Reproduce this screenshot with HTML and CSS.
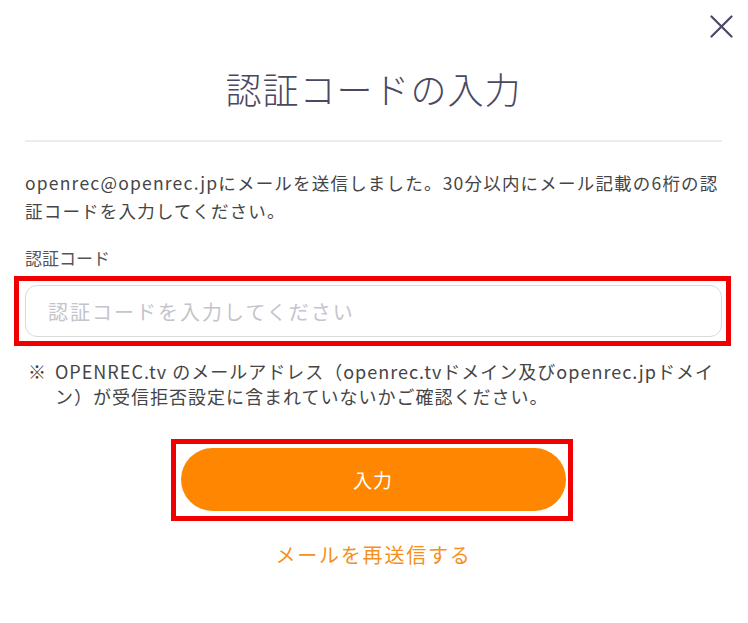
FILE: index.html
```html
<!DOCTYPE html>
<html lang="ja">
<head>
<meta charset="utf-8">
<title>認証コードの入力</title>
<link rel="stylesheet" href="styles.css">
</head>
<body>
<div class="modal">
  <button class="close" aria-label="閉じる">
    <svg width="23" height="23" viewBox="0 0 23 23"><path d="M1.5 1.5 L21.5 21.5 M21.5 1.5 L1.5 21.5" stroke="#4a4866" stroke-width="2.2" stroke-linecap="round" fill="none"/></svg>
  </button>
  <h1 class="title">認証コードの入力</h1>
  <div class="divider"></div>
  <p class="lead">openrec@openrec.jpにメールを送信しました。30分以内にメール記載の6桁の認証コードを入力してください。</p>
  <label class="label" for="code">認証コード</label>
  <div class="mark mark-input">
    <input id="code" class="input" type="text" placeholder="認証コードを入力してください">
  </div>
  <p class="notice"><span class="notice-mark">※</span><span class="notice-text">OPENREC.tv のメールアドレス（openrec.tvドメイン及びopenrec.jpドメイン）が受信拒否設定に含まれていないかご確認ください。</span></p>
  <div class="mark mark-btn">
    <button class="submit">入力</button>
  </div>
  <a class="resend" href="#">メールを再送信する</a>
</div>
</body>
</html>
```

FILE: styles.css
```css
* { box-sizing: border-box; }
html, body { margin: 0; padding: 0; background: #fff; }
body {
  font-family: "Noto Sans CJK JP", "Noto Sans", sans-serif;
  color: #444;
}
.modal {
  position: relative;
  width: 748px;
  height: 623px;
  padding: 0 26px 0 25px;
  display: flex;
  flex-direction: column;
}
.close {
  position: absolute;
  top: 15px;
  right: 15px;
  width: 23px;
  height: 23px;
  padding: 0;
  border: 0;
  background: none;
  display: flex;
}
.title {
  margin: 61px 0 0;
  font-size: 36px;
  line-height: 54px;
  font-weight: 300;
  color: #4a4862;
  text-align: center;
  letter-spacing: 1px;
}
.divider {
  margin-top: 25px;
  border-top: 2px solid #ececec;
}
.lead {
  margin: 27px 0 0;
  font-size: 17.5px;
  line-height: 28px;
  letter-spacing: 1.2px;
  color: #454545;
}
.label {
  margin-top: 19px;
  font-size: 17px;
  line-height: 28px;
  color: #555;
}
.mark {
  border: 5px solid #f00000;
}
.mark-input {
  margin: 4px -9px 0 -11px;
  padding: 4px 4px 4px 6px;
}
.input {
  display: block;
  width: 100%;
  height: 52px;
  border: 1px solid #d9dade;
  border-radius: 12px;
  padding: 0 0 0 22px;
  font-family: inherit;
  font-size: 20px;
  letter-spacing: 2px;
  color: #444;
  outline: none;
}
.input::placeholder { color: #c4c4cc; }
.notice {
  margin: 13px 0 0;
  display: flex;
  font-size: 18px;
  line-height: 25px;
  color: #454545;
}
.notice-mark {
  flex: 0 0 30px;
  padding-left: 3px;
}
.notice-text { flex: 1; letter-spacing: 1px; }
.mark-btn {
  align-self: center;
  margin: 30px 0 0 -4px;
  padding: 4px 2px 5px 5px;
}
.submit {
  display: block;
  width: 385px;
  height: 63px;
  border: 0;
  border-radius: 32px;
  background: #ff8600;
  color: #fff;
  font-family: inherit;
  font-size: 19px;
  letter-spacing: 1px;
}
.resend {
  align-self: center;
  margin-top: 20px;
  font-size: 20px;
  line-height: 28px;
  letter-spacing: 1.8px;
  color: #f5901e;
  text-decoration: none;
}
```
